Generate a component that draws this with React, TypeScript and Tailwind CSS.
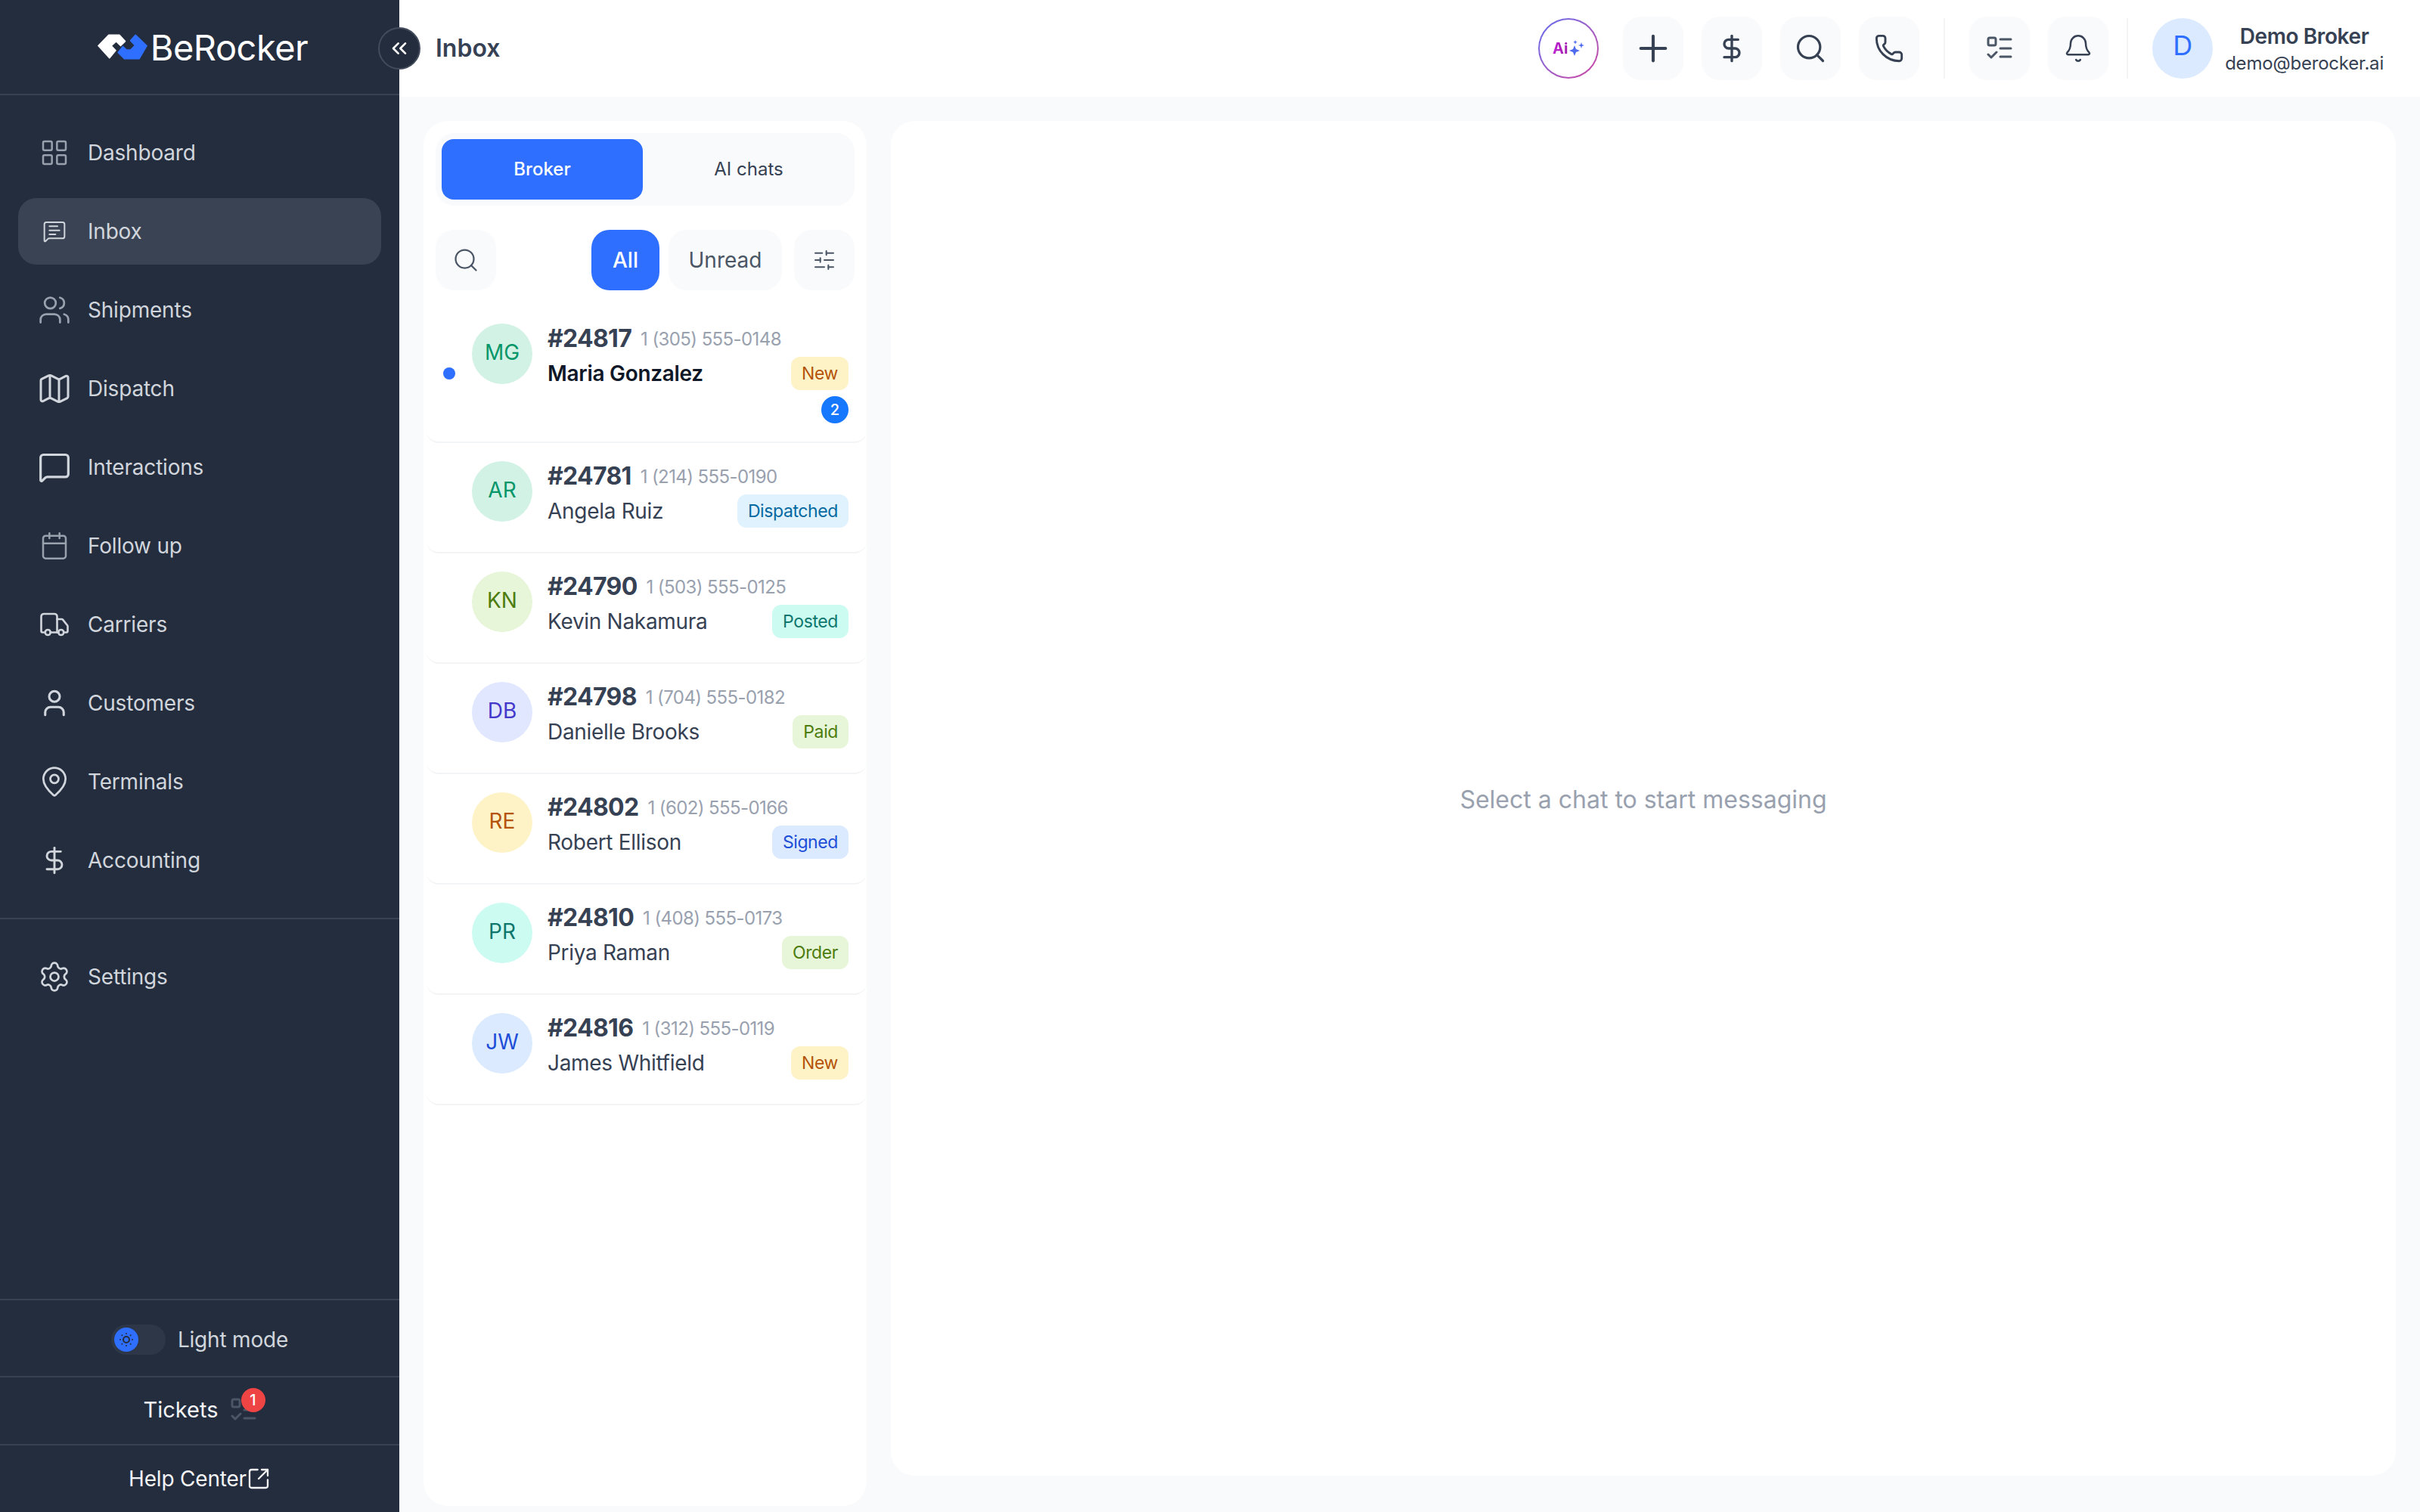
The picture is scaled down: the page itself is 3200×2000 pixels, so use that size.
import { Bell, Calendar, ChevronsLeft, DollarSign, LayoutGrid, Map, MapPin, MessageSquare, MessageSquareText, Phone, Plus, Search, Settings, SlidersHorizontal, SquareArrowOutUpRight, SunDim, Truck, User, Users } from "lucide-react";

const font = { fontFamily: "Inter, 'Noto Sans', sans-serif" };

const nav = [
  { label: "Dashboard", icon: LayoutGrid, size: 20, stroke: 1.5, cls: "text-gray-400" },
  { label: "Inbox", icon: MessageSquareText, size: 16, stroke: 1.5, cls: "text-gray-300", active: true },
  { label: "Shipments", icon: Users, size: 22, stroke: 1.5, cls: "text-gray-400" },
  { label: "Dispatch", icon: Map, size: 24, stroke: 1.5, cls: "text-gray-300" },
  { label: "Interactions", icon: MessageSquare, size: 22, stroke: 1.75, cls: "text-gray-300" },
  { label: "Follow up", icon: Calendar, size: 20, stroke: 1.5, cls: "text-gray-400" },
  { label: "Carriers", icon: Truck, size: 21, stroke: 1.5, cls: "text-gray-300" },
  { label: "Customers", icon: User, size: 21, stroke: 1.75, cls: "text-gray-300" },
  { label: "Terminals", icon: MapPin, size: 22, stroke: 1.5, cls: "text-gray-300" },
  { label: "Accounting", icon: DollarSign, size: 20, stroke: 1.75, cls: "text-gray-300" },
];

const chats = [
  { id: "#24817", phone: "1 (305) 555-0148", name: "Maria Gonzalez", initials: "MG", avatar: "bg-[#d1f2e4] text-[#059669]", status: "New", badge: "bg-[#fef3c7] text-[#b45309]", unread: 2 },
  { id: "#24781", phone: "1 (214) 555-0190", name: "Angela Ruiz", initials: "AR", avatar: "bg-[#d1f2e4] text-[#059669]", status: "Dispatched", badge: "bg-[#e0f2fe] text-[#0369a1]" },
  { id: "#24790", phone: "1 (503) 555-0125", name: "Kevin Nakamura", initials: "KN", avatar: "bg-[#e7f5d8] text-[#4d7c0f]", status: "Posted", badge: "bg-[#ccfbf1] text-[#0f766e]" },
  { id: "#24798", phone: "1 (704) 555-0182", name: "Danielle Brooks", initials: "DB", avatar: "bg-[#e0e7ff] text-[#4338ca]", status: "Paid", badge: "bg-[#e7f5d8] text-[#4d7c0f]" },
  { id: "#24802", phone: "1 (602) 555-0166", name: "Robert Ellison", initials: "RE", avatar: "bg-[#fef3c7] text-[#b45309]", status: "Signed", badge: "bg-[#dbeafe] text-[#1d4ed8]" },
  { id: "#24810", phone: "1 (408) 555-0173", name: "Priya Raman", initials: "PR", avatar: "bg-[#ccfbf1] text-[#0f766e]", status: "Order", badge: "bg-[#e7f5d8] text-[#4d7c0f]" },
  { id: "#24816", phone: "1 (312) 555-0119", name: "James Whitfield", initials: "JW", avatar: "bg-[#dbeafe] text-[#1d4ed8]", status: "New", badge: "bg-[#fef3c7] text-[#b45309]" },
];

function Logo() {
  return (
    <svg width="33" height="17" viewBox="-3 -3 201 101" className="shrink-0">
      <path d="M0 43 L42 0 H85 L108 25 L90 43 L72 25 L52 43 L70 62 L45 92 Z" fill="#fff" stroke="#fff" strokeWidth="5" strokeLinejoin="round" />
      <path d="M195 43 L150 0 L130 22 L148 42 L130 60 H114 L99 46 L80 70 L105 95 H165 Z" fill="#2f6fff" stroke="#2f6fff" strokeWidth="5" strokeLinejoin="round" />
    </svg>
  );
}

function TasksIcon({ className }: { className?: string }) {
  return (
    <svg width="17" height="17" viewBox="0 0 17 17" fill="none" stroke="currentColor" strokeWidth="1.5" strokeLinecap="round" strokeLinejoin="round" className={className}>
      <rect x="1" y="1.5" width="5" height="5" rx="1" />
      <path d="M9 2.5h7M9 8.5h7M9 14h7M1 12.5l2 2 3.5-3.5" />
    </svg>
  );
}

function Sidebar() {
  return (
    <aside className="flex h-full w-[264px] shrink-0 flex-col bg-[#242d3e]">
      <div className="flex h-[63px] items-center justify-center gap-0.5 border-b border-[#374151] pl-1">
        <Logo />
        <span className="text-[23.5px] leading-none tracking-[-0.25px] text-white">BeRocker</span>
      </div>
      <nav className="flex flex-col gap-2 px-3 pt-4 pb-4">
        {nav.map((item) => (
          <a key={item.label} className={`flex h-11 items-center rounded-xl ${item.active ? "bg-[#3a4353]" : ""}`}>
            <span className={`flex w-[47px] shrink-0 items-center justify-center pl-px ${item.cls}`}>
              <item.icon size={item.size} strokeWidth={item.stroke} />
            </span>
            <span className="-ml-px text-sm tracking-[-0.1px] text-gray-300">{item.label}</span>
          </a>
        ))}
      </nav>
      <div className="border-t border-[#374151] px-3 py-4">
        <a className="flex h-11 items-center">
          <span className="flex w-[47px] shrink-0 items-center justify-center pl-px text-gray-300">
            <Settings size={22} strokeWidth={1.5} />
          </span>
          <span className="-ml-px text-sm tracking-[-0.1px] text-gray-300">Settings</span>
        </a>
      </div>
      <div className="mt-auto flex flex-col">
        <div className="flex h-[51px] items-center justify-center gap-2 border-t border-[#374151] pt-0.5">
          <span className="flex h-5 w-9 items-center rounded-full bg-[#2d3748] px-0.5">
            <span className="flex h-4 w-4 items-center justify-center rounded-full bg-[#2f6fff] text-[#242d3e]">
              <SunDim size={12} strokeWidth={2} />
            </span>
          </span>
          <span className="text-sm tracking-[-0.1px] text-gray-300">Light mode</span>
        </div>
        <div className="flex h-[45px] items-center justify-center gap-2 border-t border-[#374151] pb-px">
          <span className="text-[14.5px] text-gray-100">Tickets</span>
          <span className="relative text-gray-600">
            <TasksIcon />
            <span className="absolute -top-1.5 left-[7px] flex h-4 w-4 items-center justify-center rounded-full bg-[#ef4444] text-[10px] font-medium text-white">1</span>
          </span>
        </div>
        <div className="flex h-[45px] items-center justify-center border-t border-[#374151] text-gray-100">
          <span className="text-sm tracking-[-0.1px]">Help Center</span>
          <SquareArrowOutUpRight size={16} strokeWidth={1.75} />
        </div>
      </div>
    </aside>
  );
}

function HeaderButton({ children }: { children: React.ReactNode }) {
  return <button className="flex h-[42px] w-10 items-center justify-center rounded-xl bg-gray-50 text-gray-700">{children}</button>;
}

function Header() {
  return (
    <header className="relative flex h-16 shrink-0 items-center bg-white pr-6 pl-6">
      <button className="absolute top-[18px] -left-3.5 flex h-7 w-7 items-center justify-center rounded-full border border-[#434c5b] bg-[#242d3e] text-white">
        <ChevronsLeft size={16} strokeWidth={2} />
      </button>
      <h1 className="text-base font-semibold text-gray-700">Inbox</h1>
      <div className="ml-auto flex items-center gap-3">
        <div className="mr-1 h-10 w-10 rounded-full bg-gradient-to-br from-[#5b6cf0] to-[#d03fa0] p-px">
          <div className="flex h-full w-full items-center justify-center gap-px rounded-full bg-white">
            <span className="bg-gradient-to-r from-[#c026d3] to-[#a21caf] bg-clip-text text-[10px] font-bold text-transparent">Ai</span>
            <svg width="10" height="11" viewBox="0 0 10 11" fill="#4f6bed">
              <path d="M3.5 3.5 L4.5 6 L7 7 L4.5 8 L3.5 10.5 L2.5 8 L0 7 L2.5 6 Z" />
              <path d="M8 1.5 L8.5 3 L10 3.5 L8.5 4 L8 5.5 L7.5 4 L6 3.5 L7.5 3 Z" />
              <path d="M4 0 L4.4 1 L5.4 1.4 L4.4 1.8 L4 2.8 L3.6 1.8 L2.6 1.4 L3.6 1 Z" />
            </svg>
          </div>
        </div>
        <HeaderButton><Plus size={28} strokeWidth={1.75} /></HeaderButton>
        <HeaderButton><DollarSign size={20} strokeWidth={2} /></HeaderButton>
        <HeaderButton><Search size={22} strokeWidth={1.75} /></HeaderButton>
        <HeaderButton><Phone size={20} strokeWidth={1.75} /></HeaderButton>
        <div className="mx-1 h-10 w-px bg-gray-100" />
        <HeaderButton><TasksIcon className="text-gray-600" /></HeaderButton>
        <HeaderButton><Bell size={20} strokeWidth={1.5} /></HeaderButton>
        <div className="mr-1 h-10 w-px bg-gray-100" />
        <div className="flex items-center gap-2">
          <div className="flex h-10 w-10 items-center justify-center rounded-full bg-[#dbeafe] pb-1 text-lg text-[#2f6fff]">D</div>
          <div className="flex flex-col items-center">
            <span className="text-sm leading-5 font-semibold tracking-[-0.2px] text-gray-700">Demo Broker</span>
            <span className="text-xs leading-4 tracking-[-0.1px] text-gray-700">demo@berocker.ai</span>
          </div>
        </div>
      </div>
    </header>
  );
}

function ChatRow({ chat }: { chat: (typeof chats)[number] }) {
  const unread = chat.unread !== undefined;
  return (
    <div className={`relative flex gap-2.5 rounded-lg border-b border-gray-100 pt-3 pr-3 pl-[30px] ${unread ? "pb-3" : "pb-4"}`}>
      {unread && <span className="absolute top-1/2 left-[11px] h-2 w-2 -translate-y-1/2 rounded-full bg-[#2f6fff]" />}
      <div className={`flex h-10 w-10 shrink-0 items-center justify-center rounded-full pb-0.5 text-sm ${chat.avatar}`}>{chat.initials}</div>
      <div className="min-w-0 flex-1">
        <div className="flex h-5 items-center gap-1.5 whitespace-nowrap">
          <span className="text-base font-bold tracking-[-0.35px] text-gray-700">{chat.id}</span>
          <span className="mt-px text-xs tracking-[-0.3px] text-gray-400">{chat.phone}</span>
        </div>
        <div className="mt-0.5 flex h-[22px] items-center justify-between">
          <span className={`text-sm tracking-[-0.15px] ${unread ? "font-semibold text-gray-900" : "text-gray-700"}`}>{chat.name}</span>
          <span className={`rounded-md px-[7px] py-[3px] text-[11.5px] leading-4 tracking-[-0.2px] ${chat.badge}`}>{chat.status}</span>
        </div>
        {unread && (
          <div className="mt-1 flex justify-end">
            <span className="flex h-[18px] w-[18px] items-center justify-center rounded-full bg-[#1677ff] text-[10px] font-medium text-white">{chat.unread}</span>
          </div>
        )}
      </div>
    </div>
  );
}

function ChatList() {
  return (
    <section className="h-[916px] w-[293px] shrink-0 rounded-2xl bg-white pt-2">
      <div className="mx-2 flex h-12 rounded-xl bg-gray-50 p-1">
        <button className="w-[133px] rounded-lg bg-[#2f6fff] text-xs font-medium text-white">Broker</button>
        <button className="flex-1 rounded-lg pl-1 text-xs text-gray-700">AI chats</button>
      </div>
      <div className="mx-2 mt-4 flex h-10 items-center gap-2">
        <button className="mr-auto flex h-10 w-10 items-center justify-center rounded-xl bg-gray-50 text-gray-600">
          <Search size={18} strokeWidth={1.5} />
        </button>
        <button className="-mr-0.5 h-10 w-[45px] rounded-xl bg-[#2f6fff] text-sm font-medium text-white">All</button>
        <button className="h-10 w-[75px] rounded-xl bg-gray-50 text-sm text-gray-600">Unread</button>
        <button className="flex h-10 w-10 items-center justify-center rounded-xl bg-gray-50 text-gray-600">
          <SlidersHorizontal size={16} strokeWidth={1.5} />
        </button>
      </div>
      <div className="mt-2.5 ml-0.5">
        {chats.map((chat) => (
          <ChatRow key={chat.id} chat={chat} />
        ))}
      </div>
    </section>
  );
}

export default function App() {
  return (
    <div className="h-[2000px] w-[3200px] overflow-hidden bg-gray-50">
      <div className="flex h-[1000px] w-[1600px] [zoom:2]" style={font}>
        <Sidebar />
        <div className="flex min-w-0 flex-1 flex-col">
          <Header />
          <main className="flex flex-1 gap-4 px-4 pt-4">
            <ChatList />
            <section className="flex h-[896px] flex-1 items-center justify-center rounded-2xl bg-white">
              <p className="pt-0.5 text-base text-gray-400">Select a chat to start messaging</p>
            </section>
          </main>
        </div>
      </div>
    </div>
  );
}
